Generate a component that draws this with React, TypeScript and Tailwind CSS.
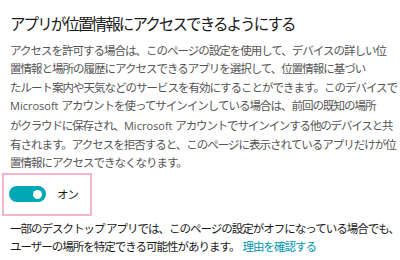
export default function App() {
  const jp = "font-['Noto_Sans_CJK_JP','Noto_Sans',sans-serif]";
  const ms = "font-['Open_Sans',sans-serif] tracking-normal text-[11px]";
  return (
    <div className={`w-[400px] h-[260px] bg-white overflow-hidden ${jp}`}>
      <div className="pl-[10px] pt-[11px]">
        <h1 className="text-[15.5px] leading-[24px] tracking-[-1.9px] text-[#1a1a1a] font-normal whitespace-nowrap">
          アプリが位置情報にアクセスできるようにする
        </h1>
        <div className="mt-[6px] text-[11.5px] leading-[18.4px] tracking-[-1px] text-[#555555] whitespace-nowrap">
          <div>アクセスを許可する場合は、このページの設定を使用して、デバイスの詳しい位</div>
          <div>置情報と場所の履歴にアクセスできるアプリを選択して、位置情報に基づい</div>
          <div>たルート案内や天気などのサービスを有効にすることができます。このデバイスで</div>
          <div>
            <span className={ms}>Microsoft </span>アカウントを使ってサインインしている場合は、前回の既知の場所
          </div>
          <div className="tracking-[-1.15px]">
            がクラウドに保存され、<span className={ms}>Microsoft </span>アカウントでサインインする他のデバイスと共
          </div>
          <div>有されます。アクセスを拒否すると、このページに表示されているアプリだけが位</div>
          <div>置情報にアクセスできなくなります。</div>
        </div>
      </div>
      <div className="ml-[2px] mt-[1px] w-[90px] h-[43px] border-2 border-[#f4b4cc] flex items-center pl-[5px]">
        <div className="w-[37px] h-[16px] rounded-full bg-[#00a7b5] flex items-center justify-end pr-[4px]">
          <div className="w-[9px] h-[9px] rounded-full bg-white" />
        </div>
        <span className="ml-[11px] text-[11.5px] tracking-[-1px] text-[#1a1a1a]">オン</span>
      </div>
      <div className="pl-[10px] mt-[3px] text-[11.5px] leading-[18.4px] tracking-[-1px] text-[#1a1a1a] whitespace-nowrap">
        <div>一部のデスクトップ アプリでは、このページの設定がオフになっている場合でも、</div>
        <div>
          ユーザーの場所を特定できる可能性があります。
          <a className="text-[#0099b0] ml-[3px]">理由を確認する</a>
        </div>
      </div>
    </div>
  );
}
